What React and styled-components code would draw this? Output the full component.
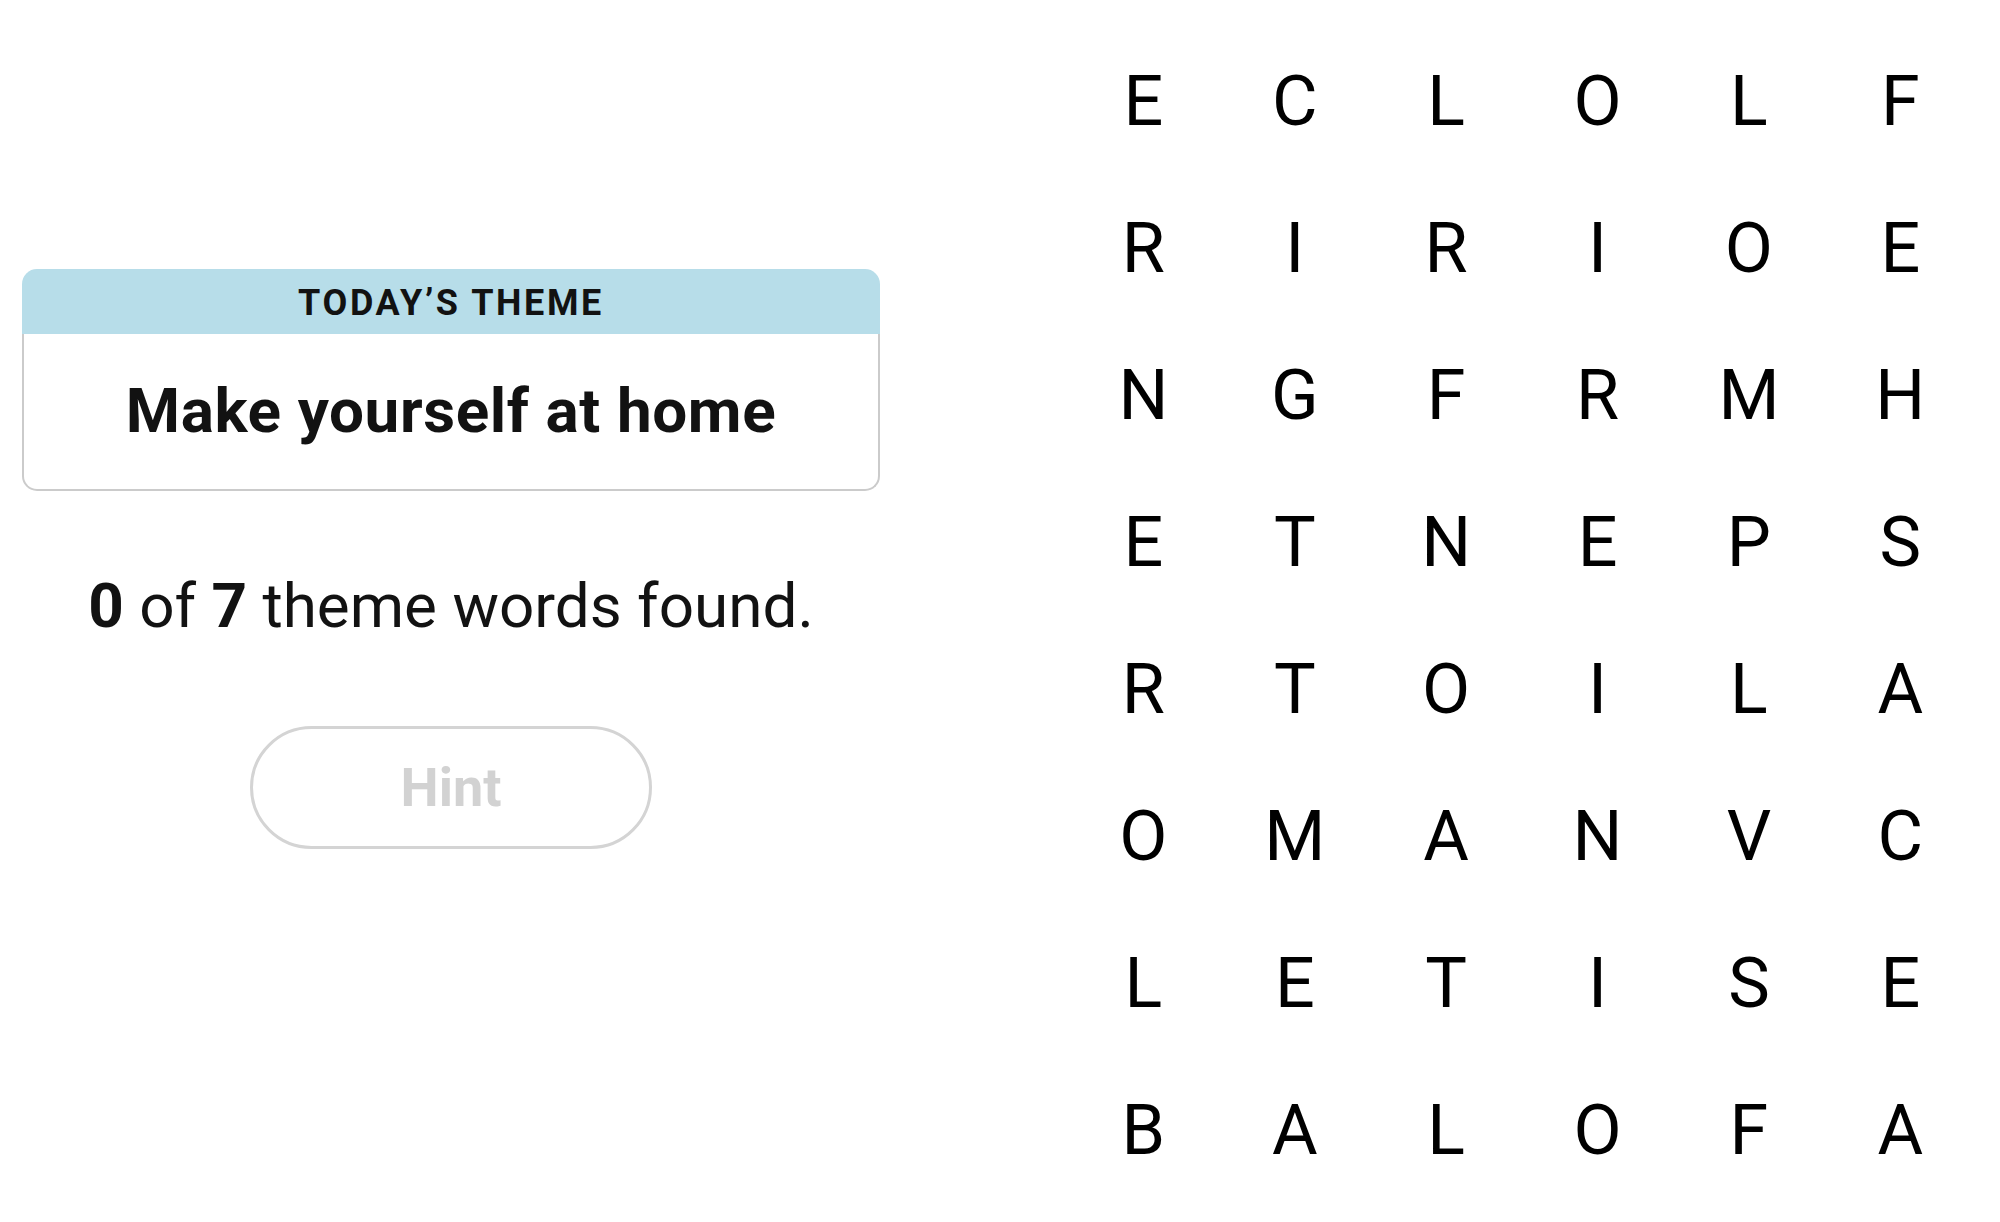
import React from 'react';
import styled, { createGlobalStyle } from 'styled-components';

const GlobalStyle = createGlobalStyle`
  html, body { margin: 0; padding: 0; background: #ffffff; }
  body { font-family: Roboto, "Liberation Sans", Arial, sans-serif; color: #121212; }
  * { box-sizing: border-box; }
`;

const Page = styled.main`
  display: flex;
  align-items: flex-start;
  width: 2000px;
  height: 1222px;
  padding-left: 22px;
  gap: 187.7px;
  overflow: hidden;
`;

const Sidebar = styled.section`
  width: 858px;
  padding-top: 269px;
  display: flex;
  flex-direction: column;
  align-items: center;
`;

const ThemeCard = styled.div`
  width: 100%;
  display: flex;
  flex-direction: column;
`;

const ThemeHeader = styled.div`
  height: 65px;
  background: #b7dde9;
  border-radius: 15px 15px 0 0;
  display: flex;
  align-items: center;
  justify-content: center;
  font-size: 36px;
  font-weight: 700;
  letter-spacing: 2.6px;
  text-transform: uppercase;
  color: #121212;
  padding-top: 2px;
`;

const ThemeBody = styled.div`
  height: 157px;
  border: 2px solid #cbcbcb;
  border-top: none;
  border-radius: 0 0 15px 15px;
  display: flex;
  align-items: center;
  justify-content: center;
  font-size: 62px;
  font-weight: 700;
  letter-spacing: 0.6px;
  color: #121212;
  padding-bottom: 2px;
`;

const Progress = styled.p`
  margin: 78px 0 0;
  font-size: 62px;
  line-height: 1.2;
  font-weight: 400;
  color: #121212;
  text-align: center;
  white-space: nowrap;
`;

const Strong = styled.b`
  font-weight: 700;
`;

const HintButton = styled.button`
  margin-top: 83px;
  width: 402px;
  height: 123px;
  border: 3px solid #d4d4d4;
  border-radius: 999px;
  background: #ffffff;
  color: #d2d2d2;
  font-family: Roboto, "Liberation Sans", Arial, sans-serif;
  font-size: 54px;
  font-weight: 700;
  cursor: default;
  padding: 0;
`;

const Board = styled.div`
  margin-top: 25.5px;
  display: grid;
  grid-template-columns: repeat(6, 151.4px);
  grid-auto-rows: 147.1px;
`;

const Letter = styled.div`
  display: flex;
  align-items: center;
  justify-content: center;
  font-size: 70px;
  font-weight: 400;
  color: #000000;
  padding-top: 3px;
`;

const rows = [
  'ECLOLF',
  'RIRIOE',
  'NGFRMH',
  'ETNEPS',
  'RTOILA',
  'OMANVC',
  'LETISE',
  'BALOFA',
];

export default function App() {
  return (
    <>
      <GlobalStyle />
      <Page>
        <Sidebar>
          <ThemeCard>
            <ThemeHeader>Today’s Theme</ThemeHeader>
            <ThemeBody>Make yourself at home</ThemeBody>
          </ThemeCard>
          <Progress>
            <Strong>0</Strong> of <Strong>7</Strong> theme words found.
          </Progress>
          <HintButton disabled>Hint</HintButton>
        </Sidebar>
        <Board>
          {rows.map((row, r) =>
            row.split('').map((ch, c) => <Letter key={`${r}-${c}`}>{ch}</Letter>)
          )}
        </Board>
      </Page>
    </>
  );
}
